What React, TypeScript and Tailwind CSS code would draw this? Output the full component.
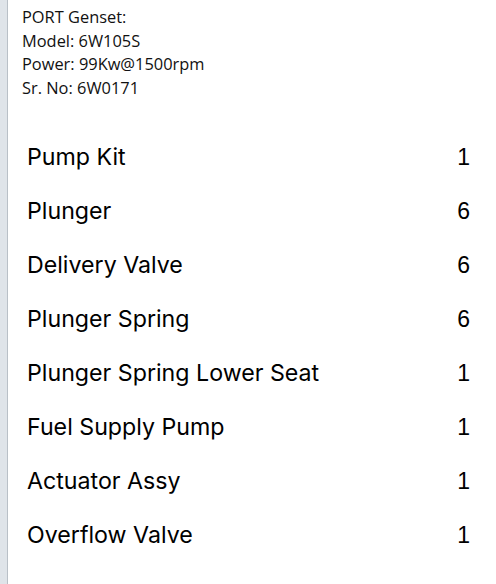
import React from "react";

const items: [string, string][] = [
  ["Pump Kit", "1"],
  ["Plunger", "6"],
  ["Delivery Valve", "6"],
  ["Plunger Spring", "6"],
  ["Plunger Spring Lower Seat", "1"],
  ["Fuel Supply Pump", "1"],
  ["Actuator Assy", "1"],
  ["Overflow Valve", "1"],
];

export default function App() {
  return (
    <div className="flex h-[584px] w-[496px] overflow-hidden bg-white">
      <div className="w-[7px] shrink-0 bg-[#dfe4e9]" />
      <div className="w-px shrink-0 bg-[#b9c0c7]" />
      <div className="flex-1 flex flex-col">
        <div
          className="pl-[14px] pt-[5px] text-[16.4px] leading-[23.5px] text-[#111]"
          style={{ fontFamily: '"Open Sans", sans-serif' }}
        >
          <div>PORT Genset:</div>
          <div>Model: 6W105S</div>
          <div>Power: 99Kw@1500rpm</div>
          <div>Sr. No: 6W0171</div>
        </div>
        <div className="mt-[43px] flex flex-col">
          {items.map(([name, qty]) => (
            <div key={name} className="flex h-[54px] items-start justify-between pl-[19px] pr-[26px]">
              <span className="text-[23.2px] leading-[30px] text-black" style={{ fontFamily: "Inter, sans-serif" }}>
                {name}
              </span>
              <span className="text-[23px] leading-[30px] text-black" style={{ fontFamily: '"Liberation Sans", sans-serif' }}>
                {qty}
              </span>
            </div>
          ))}
        </div>
      </div>
    </div>
  );
}
